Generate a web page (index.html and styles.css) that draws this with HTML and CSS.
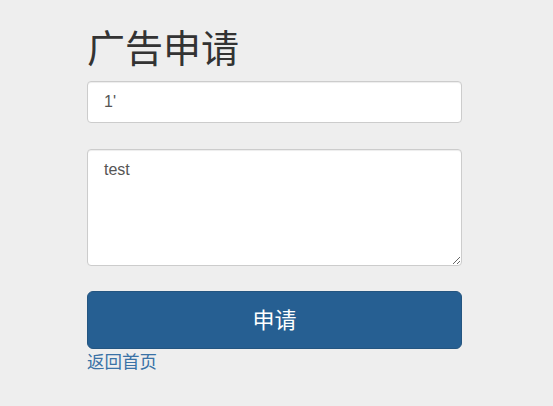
FILE: index.html
```html
<!DOCTYPE html>
<html lang="zh">
<head>
<meta charset="utf-8">
<title>广告申请</title>
<link rel="stylesheet" href="styles.css">
</head>
<body>
<div class="wrap">
  <h1 class="title">广告申请</h1>
  <form class="form">
    <input class="field" type="text" value="1'">
    <textarea class="field area">test</textarea>
    <button class="btn" type="button">申请</button>
  </form>
  <a class="back" href="#">返回首页</a>
</div>
</body>
</html>
```
FILE: styles.css
```css
html, body {
  margin: 0;
  padding: 0;
  background: #eeeeee;
}
body {
  font-family: "Liberation Sans", "Noto Sans CJK SC", sans-serif;
  color: #333;
}
.wrap {
  width: 375px;
  margin-left: 87px;
  padding-top: 21px;
}
.title {
  margin: 0 0 10px 0;
  font-size: 38px;
  font-weight: 400;
  line-height: 50px;
  color: #333;
  font-family: "Noto Sans CJK SC", sans-serif;
}
.form {
  display: flex;
  flex-direction: column;
  margin: 0;
}
.field {
  box-sizing: border-box;
  width: 375px;
  height: 42px;
  margin: 0;
  padding: 9px 16px;
  font-family: "Liberation Sans", "Noto Sans CJK SC", sans-serif;
  font-size: 16px;
  color: #555;
  background: #fff;
  border: 1px solid #ccc;
  border-radius: 4px;
  box-shadow: inset 0 1px 1px rgba(0,0,0,.075);
  outline: none;
}
.area {
  height: 117px;
  margin-top: 26px;
  padding-top: 10px;
  resize: vertical;
  line-height: 20px;
}
.btn {
  margin-top: 25px;
  height: 58px;
  width: 375px;
  padding: 0 0 5px 0;
  border: 1px solid #245580;
  border-radius: 6px;
  background: #265f92;
  color: #fff;
  font-family: "Noto Sans CJK SC", sans-serif;
  font-size: 22px;
  line-height: 24px;
  cursor: pointer;
}
.back {
  display: inline-block;
  margin-top: 0;
  font-family: "Noto Sans CJK SC", sans-serif;
  font-size: 17.5px;
  line-height: 24px;
  color: #3a72a6;
  text-decoration: none;
}
```
